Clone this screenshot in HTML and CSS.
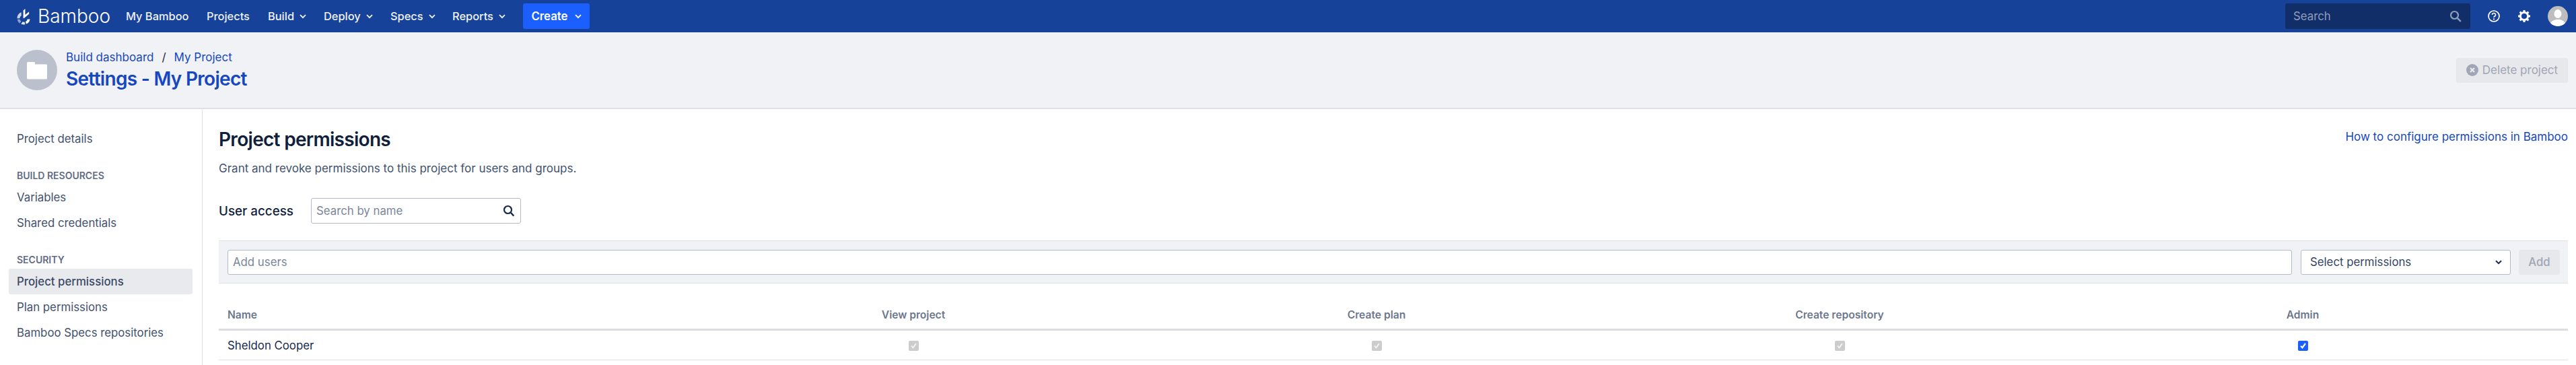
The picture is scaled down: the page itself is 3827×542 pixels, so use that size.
FILE: index.html
```html
<!DOCTYPE html>
<html lang="en">
<head>
    <meta charset="UTF-8">
    <title>Settings - My Project</title>
    <link rel="stylesheet" href="styles.css">
</head>
<body>
    <header class="topbar">
        <a class="logo">
            <svg class="logo-mark" viewBox="0 0 22 26" width="21" height="25">
                <path d="M13 1v9.5l6-5v3.5l-8 7-1-1V3.5z" fill="#fff"/>
                <path d="M7 6.5v5.2A5 5 0 0 0 4.5 16H0.6A9 9 0 0 1 7 6.5z" fill="#c9d3e8"/>
                <path d="M0.8 17.5h3.9a5 5 0 0 0 2 3l-2.4 3.2a9 9 0 0 1-3.5-6.2z" fill="#8ea2cd"/>
                <path d="M6.6 24.4 9 21.2a5 5 0 0 0 3 .2l1 3.8a9 9 0 0 1-6.4-.8z" fill="#dfe5f2"/>
                <path d="M14.6 24.6 13.5 21a5 5 0 0 0 3-3.8h4a9 9 0 0 1-5.9 7.4z" fill="#fff"/>
            </svg>
            <span class="logo-text">Bamboo</span>
        </a>
        <nav class="nav">
            <a class="nav-item nav-myb">My Bamboo</a>
            <a class="nav-item nav-prj">Projects</a>
            <a class="nav-item nav-bld">Build <svg class="chev" viewBox="0 0 10 7" width="10" height="7"><path d="M1 1.2 5 5.2l4-4" fill="none" stroke="currentColor" stroke-width="1.8"/></svg></a>
            <a class="nav-item nav-dep">Deploy <svg class="chev" viewBox="0 0 10 7" width="10" height="7"><path d="M1 1.2 5 5.2l4-4" fill="none" stroke="currentColor" stroke-width="1.8"/></svg></a>
            <a class="nav-item nav-spc">Specs <svg class="chev" viewBox="0 0 10 7" width="10" height="7"><path d="M1 1.2 5 5.2l4-4" fill="none" stroke="currentColor" stroke-width="1.8"/></svg></a>
            <a class="nav-item nav-rep">Reports <svg class="chev" viewBox="0 0 10 7" width="10" height="7"><path d="M1 1.2 5 5.2l4-4" fill="none" stroke="currentColor" stroke-width="1.8"/></svg></a>
            <a class="create-btn">Create <svg class="chev" viewBox="0 0 10 7" width="10" height="7"><path d="M1 1.2 5 5.2l4-4" fill="none" stroke="currentColor" stroke-width="1.8"/></svg></a>
        </nav>
        <div class="top-right">
            <div class="top-search">
                <span>Search</span>
                <svg viewBox="0 0 20 20" width="20" height="20"><circle cx="8.5" cy="8.5" r="5.5" fill="none" stroke="currentColor" stroke-width="2.2"/><path d="m12.8 12.8 5 5" stroke="currentColor" stroke-width="2.4"/></svg>
            </div>
            <svg class="top-icon" viewBox="0 0 20 20" width="20" height="20"><circle cx="10" cy="10" r="8" fill="none" stroke="#fff" stroke-width="1.7"/><path d="M7.5 8a2.5 2.5 0 1 1 3.6 2.2c-.8.4-1.1.9-1.1 1.8" fill="none" stroke="#fff" stroke-width="1.6"/><circle cx="10" cy="14.4" r="1.1" fill="#fff"/></svg>
            <svg class="top-icon gear" viewBox="0 0 20 20" width="20" height="20"><circle cx="10" cy="10" r="5.6" fill="none" stroke="#fff" stroke-width="3"/><path d="M10 1v3M10 16v3M1 10h3M16 10h3M3.6 3.6l2.2 2.2M14.2 14.2l2.2 2.2M3.6 16.4l2.2-2.2M14.2 5.8l2.2-2.2" stroke="#fff" stroke-width="3"/></svg>
            <svg class="avatar" viewBox="0 0 30 30" width="30" height="30"><defs><clipPath id="av"><circle cx="15" cy="15" r="15"/></clipPath></defs><g clip-path="url(#av)"><rect width="30" height="30" fill="#bdbdbd"/><ellipse cx="15" cy="11.5" rx="5.5" ry="6.5" fill="#fff"/><path d="M2 30c1-7 7-9 10-10h6c3 1 9 3 10 10z" fill="#fff"/></g></svg>
        </div>
    </header>

    <section class="page-header">
        <div class="project-avatar">
            <svg viewBox="0 0 32 28" width="32" height="28"><path d="M1 3.500a1.500 1.500 0 0 1 1.500-1.500h9a1.500 1.500 0 0 1 1.500 1.500V5.500h16.500A1.500 1.500 0 0 1 31 7v19a1.500 1.500 0 0 1-1.500 1.500h-27A1.500 1.500 0 0 1 1 26z" fill="#fff"/></svg>
        </div>
        <div class="page-title">
            <div class="breadcrumbs"><a>Build dashboard</a><span class="sep">/</span><a>My Project</a></div>
            <h1>Settings - My Project</h1>
        </div>
        <button class="delete-btn">
            <svg viewBox="0 0 18 18" width="18" height="18"><circle cx="9" cy="9" r="9" fill="#a0a6b5"/><path d="m6 6 6 6M12 6l-6 6" stroke="#e8e9ed" stroke-width="2.4"/></svg>
            Delete project
        </button>
    </section>

    <div class="layout">
        <aside class="sidebar">
            <a class="side-item first">Project details</a>
            <h4 class="side-head">Build resources</h4>
            <a class="side-item">Variables</a>
            <a class="side-item">Shared credentials</a>
            <h4 class="side-head">Security</h4>
            <a class="side-item active">Project permissions</a>
            <a class="side-item">Plan permissions</a>
            <a class="side-item">Bamboo Specs repositories</a>
        </aside>
        <main class="content">
            <div class="title-row">
                <h2>Project permissions</h2>
                <a class="help-link">How to configure permissions in Bamboo</a>
            </div>
            <p class="intro">Grant and revoke permissions to this project for users and groups.</p>
            <div class="filter-row">
                <span class="filter-label">User access</span>
                <div class="filter-input">
                    <span>Search by name</span>
                    <svg viewBox="0 0 20 20" width="20" height="20"><circle cx="8.500" cy="8.500" r="5.500" fill="none" stroke="#172b4d" stroke-width="2.200"/><path d="m12.800 12.800 4.500 4.800" stroke="#172b4d" stroke-width="2.400"/></svg>
                </div>
            </div>
            <div class="add-bar">
                <div class="add-input">Add users</div>
                <div class="add-select">Select permissions
                    <svg viewBox="0 0 10 7" width="10" height="7"><path d="M1 1.200 5 5.200l4-4" fill="none" stroke="#172b4d" stroke-width="2"/></svg>
                </div>
                <button class="add-btn">Add</button>
            </div>
            <div class="perm-table">
                <div class="perm-row perm-head">
                    <div class="cell-name">Name</div>
                    <div>View project</div>
                    <div>Create plan</div>
                    <div>Create repository</div>
                    <div>Admin</div>
                </div>
                <div class="perm-row">
                    <div class="cell-name">Sheldon Cooper</div>
                    <div><span class="check off"><svg viewBox="0 0 13 13" width="13" height="13"><path d="m3 6.800 2.500 2.500L10 3" fill="none" stroke="#f2f2f2" stroke-width="2"/></svg></span></div>
                    <div><span class="check off"><svg viewBox="0 0 13 13" width="13" height="13"><path d="m3 6.800 2.500 2.500L10 3" fill="none" stroke="#f2f2f2" stroke-width="2"/></svg></span></div>
                    <div><span class="check off"><svg viewBox="0 0 13 13" width="13" height="13"><path d="m3 6.800 2.500 2.500L10 3" fill="none" stroke="#f2f2f2" stroke-width="2"/></svg></span></div>
                    <div><span class="check on"><svg viewBox="0 0 13 13" width="13" height="13"><path d="m3 6.800 2.500 2.500L10 3" fill="none" stroke="#fff" stroke-width="2.200"/></svg></span></div>
                </div>
            </div>
        </main>
    </div>
</body>
</html>
```

FILE: styles.css
```css
* {
    margin: 0;
    padding: 0;
    box-sizing: border-box;
    font-family: Inter, "Liberation Sans", sans-serif;
}

html, body {
    height: 100%;
    overflow: hidden;
}

body {
    background: #fff;
    color: #172b4d;
    font-size: 17px;
    display: flex;
    flex-direction: column;
}

/* top bar */
.topbar {
    height: 48px;
    flex: none;
    background: #164299;
    color: #fff;
    display: flex;
    align-items: center;
    padding: 0 12px 0 25px;
}

.logo {
    display: flex;
    align-items: center;
    gap: 10px;
    width: 162px;
}

.logo-text {
    font-size: 28px;
    font-weight: 300;
    color: #fff;
}

.nav {
    display: flex;
    align-items: center;
    height: 100%;
}

.nav-item {
    font-size: 16.4px;
    font-weight: 500;
    color: #eef1f8;
    display: flex;
    align-items: center;
    gap: 8px;
}

.nav-myb { width: 120px; }
.nav-prj { width: 91px; }
.nav-bld { width: 83px; }
.nav-dep { width: 99px; }
.nav-spc { width: 92px; }
.nav-rep { width: 105px; }

.create-btn {
    background: #1c5fff;
    border-radius: 3px;
    height: 38px;
    width: 99px;
    display: flex;
    align-items: center;
    justify-content: center;
    gap: 10px;
    font-weight: 600;
    font-size: 16.8px;
}

.top-right {
    margin-left: auto;
    display: flex;
    align-items: center;
}

.top-search {
    width: 275px;
    height: 38px;
    background: #122e69;
    border-radius: 3px;
    display: flex;
    align-items: center;
    justify-content: space-between;
    padding: 0 12px;
    color: #8f9dbd;
    font-size: 16.8px;
    margin-right: 25px;
}

.top-icon {
    margin-right: 25px;
}

/* page header */
.page-header {
    height: 114px;
    flex: none;
    background: #f1f2f6;
    border-bottom: 2px solid #dfe1e8;
    display: flex;
    align-items: center;
    padding: 0 12px 0 25px;
}

.project-avatar {
    width: 60px;
    height: 60px;
    border-radius: 50%;
    background: #bbc1cc;
    display: flex;
    align-items: center;
    justify-content: center;
    margin-right: 13px;
}

.breadcrumbs {
    font-size: 17px;
    color: #1547c0;
    line-height: 24px;
}

.sep {
    color: #172b4d;
    margin: 0 12px;
}

h1 {
    font-size: 28px;
    font-weight: 600;
    letter-spacing: -0.7px;
    color: #1547c0;
    line-height: 36px;
    margin-top: 2px;
}

.delete-btn {
    margin-left: auto;
    width: 166px;
    height: 37px;
    border: none;
    background: #e7e8ec;
    color: #a0a6b5;
    border-radius: 3px;
    font-size: 17px;
    display: flex;
    align-items: center;
    justify-content: center;
    gap: 6px;
}

/* sidebar and content */
.layout {
    flex: 1;
    display: flex;
}

.sidebar {
    width: 301px;
    flex: none;
    border-right: 1px solid #dfe1e8;
    padding: 25px 14px 0 13px;
}

.side-item {
    display: flex;
    align-items: center;
    height: 38px;
    padding-left: 12px;
    font-size: 16.8px;
    color: #42526e;
    border-radius: 3px;
}

.side-item.active {
    background: #e9eaee;
    font-weight: 500;
    color: #3a4964;
}

.side-head {
    padding-left: 12px;
    font-size: 14px;
    font-weight: 600;
    text-transform: uppercase;
    color: #5e6c84;
    line-height: 20px;
    margin-top: 26px;
    margin-bottom: 3px;
}

.content {
    flex: 1;
    padding: 0 12px 0 24px;
}

.title-row {
    display: flex;
    justify-content: space-between;
    align-items: center;
    padding-top: 25px;
}

h2 {
    font-size: 28px;
    font-weight: 600;
    letter-spacing: -0.7px;
    color: #101f3c;
    line-height: 40px;
}

.help-link {
    font-size: 17px;
    color: #1547c0;
    margin-top: -8px;
}

.intro {
    font-size: 17px;
    color: #42526e;
    line-height: 24px;
    margin-top: 11px;
}

.filter-row {
    display: flex;
    align-items: center;
    margin-top: 32px;
}

.filter-label {
    font-size: 18.8px;
    font-weight: 500;
    color: #101f3c;
    width: 137px;
}

.filter-input {
    width: 312px;
    height: 38px;
    border: 1px solid #b3b9c6;
    border-radius: 3px;
    display: flex;
    align-items: center;
    justify-content: space-between;
    padding: 0 7px;
    color: #7a869a;
    font-size: 16.8px;
}

.add-bar {
    margin-top: 25px;
    height: 64px;
    background: #f1f2f6;
    border-top: 1px solid #dfe1e8;
    border-bottom: 1px solid #dfe1e8;
    display: flex;
    align-items: center;
    padding: 0 12px 0 13px;
}

.add-input {
    flex: 1;
    height: 37px;
    background: #fff;
    border: 1px solid #b3b9c6;
    border-radius: 3px;
    display: flex;
    align-items: center;
    padding-left: 7px;
    color: #7a869a;
    font-size: 16.8px;
}

.add-select {
    width: 312px;
    height: 37px;
    margin-left: 13px;
    background: #fff;
    border: 1px solid #b3b9c6;
    border-radius: 3px;
    display: flex;
    align-items: center;
    justify-content: space-between;
    padding: 0 12px 0 13px;
    font-size: 16.8px;
    color: #344563;
}

.add-btn {
    width: 61px;
    height: 37px;
    margin-left: 12px;
    border: none;
    border-radius: 3px;
    background: #e7e8ec;
    color: #a0a6b5;
    font-size: 16.8px;
    font-weight: 500;
}

.perm-table {
    margin-top: 25px;
}

.perm-row {
    display: grid;
    grid-template-columns: repeat(5, 688px) 1fr;
    align-items: center;
    text-align: center;
    height: 44px;
    border-bottom: 1px solid #dfe1e8;
    font-size: 16.8px;
}

.perm-head {
    height: 45px;
    border-bottom: 3px solid #dcdde4;
    font-size: 15.6px;
    font-weight: 600;
    color: #6b778c;
}

.cell-name {
    text-align: left;
    padding-left: 13px;
}

.check {
    display: inline-flex;
    width: 15px;
    height: 15px;
    border-radius: 2px;
    align-items: center;
    justify-content: center;
    vertical-align: middle;
}

.check.off {
    background: #cccccc;
}

.check.on {
    background: #1c5fff;
}
```
